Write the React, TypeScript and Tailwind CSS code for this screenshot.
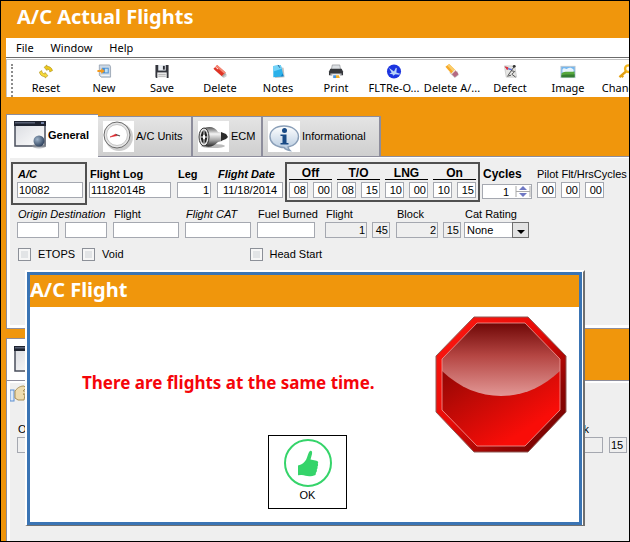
import { useState } from "react";
import type { ReactNode } from "react";
import clsx from "clsx";

const inputBase =
  "h-4 min-w-0 shrink-0 rounded-none border border-[#a5a8b0] px-px text-[11px] leading-[14px] text-black outline-none";

type BoxProps = {
  label: string;
  value?: string;
  width: string;
  right?: boolean;
  center?: boolean;
  readOnly?: boolean;
  id?: string;
};

function Box({ label, value = "", width, right, center, readOnly, id }: BoxProps) {
  return (
    <input
      id={id}
      aria-label={id ? undefined : label}
      defaultValue={value}
      readOnly={readOnly}
      className={clsx(
        inputBase,
        width,
        right && "text-right",
        center && "text-center",
        readOnly ? "bg-[#efefef]" : "bg-white"
      )}
    />
  );
}

function Field({ label, id, labelClass, ...rest }: BoxProps & { id: string; labelClass?: string }) {
  return (
    <div className="flex shrink-0 flex-col">
      <label htmlFor={id} className={clsx("h-4 w-0 pl-px whitespace-nowrap leading-4", labelClass)}>
        {label}
      </label>
      <Box label={label} id={id} {...rest} />
    </div>
  );
}

function TimePair({ label, hours, minutes }: { label: string; hours: string; minutes: string }) {
  return (
    <fieldset className="flex shrink-0 flex-col">
      <legend className="mb-[2px] h-[14px] w-full border-b border-black text-center text-[12px] font-bold leading-[14px]">
        {label}
      </legend>
      <div className="flex gap-[5px]">
        <Box label={`${label} hours`} value={hours} width="w-[19px]" right />
        <Box label={`${label} minutes`} value={minutes} width="w-[19px]" right />
      </div>
    </fieldset>
  );
}

function Check({ label }: { label: string }) {
  return (
    <label className="flex items-center gap-[7px] leading-4">
      <input
        type="checkbox"
        className="size-[13px] appearance-none border border-[#8c9098] bg-[#e2e4e6] shadow-[inset_0_0_0_2px_#f6f6f6] checked:bg-[#3f6fb5]"
      />
      {label}
    </label>
  );
}

/* ---------- toolbar icons ---------- */

const Svg = ({ children }: { children: ReactNode }) => (
  <svg width="16" height="16" viewBox="0 0 16 16" aria-hidden="true">
    {children}
  </svg>
);

const ResetIcon = () => (
  <Svg>
    <path d="M6 3.500 9 1v1.500c3 0 5 1.500 6 4.500l-3 1.500c0-2-1-3-3-3V7z" fill="#edc91c" stroke="#a88a12" strokeWidth=".6" />
    <path d="M10 12.500 7 15v-1.500c-3.500 0-5.500-2-6-5L3.500 7c0 2.500 1.500 3.500 3.500 3.500V9z" fill="#f7da3a" stroke="#a88a12" strokeWidth=".6" />
  </Svg>
);

const NewIcon = () => (
  <Svg>
    <path d="M3 1h11l1 2v11H5L3 12z" fill="#cbd8e6" stroke="#8d99a8" strokeWidth=".8" />
    <rect x="6" y="4" width="7" height="6" fill="#4a8fd2" />
    <path d="M9 5h3v4H9z" fill="#bfe0f7" />
    <path d="M1 6.500h4v-2l4 3-4 3v-2H1z" fill="#f59a1b" />
    <path d="M5 12h9" stroke="#fff" />
  </Svg>
);

const SaveIcon = () => (
  <Svg>
    <path d="M1 1h14v14H2l-1-1z" fill="#33353c" />
    <rect x="4" y="1" width="8" height="6" fill="#e9edf2" />
    <rect x="9" y="2" width="2" height="4" fill="#2b2d33" />
    <rect x="3" y="9" width="10" height="6" fill="#f7f7f7" />
    <path d="M4 11h8M4 13h8" stroke="#a9a9a9" />
  </Svg>
);

const DeleteIcon = () => (
  <Svg>
    <path d="m2 6 3-3 10 8v2l-3 2z" fill="#9b9b9b" opacity=".5" />
    <path d="M1 5 5 1l9 8-4 4z" fill="#e03325" />
    <path d="m5 1 9 8-1.500 1.500L3.500 2.500z" fill="#f58a76" />
    <path d="m10 13 4-4v2l-3 3z" fill="#a8a8a8" />
    <path d="m3 3 3 2.500" stroke="#fff" />
  </Svg>
);

const NotesIcon = () => (
  <Svg>
    <path d="m5 3 9 1 1 10-10 1z" fill="#9a9a9a" opacity=".6" />
    <path d="m3 2 8-1 3 12-11 1z" fill="#2ab1ea" />
    <path d="m3 2 8-1 1 4-9 3z" fill="#73d3f8" />
    <path d="m3 14 8-1 2-3 1 3z" fill="#1680c4" />
    <path d="m8 1 2 3" stroke="#265f8d" />
  </Svg>
);

const PrintIcon = () => (
  <Svg>
    <path d="M4 1h8l1 5H3z" fill="#dce0e4" stroke="#7c7f84" strokeWidth=".6" />
    <path d="M2 5h12l1.500 3v4H.5V8z" fill="#35373b" />
    <path d="M2 10h12v2H2z" fill="#a9adb2" />
    <path d="M4 11h8l1 4H4z" fill="#f8f8f8" />
    <path d="M5 12h3v3H5z" fill="#4593dd" />
    <path d="M8 12h3l1 3H8z" fill="#f4af27" />
  </Svg>
);

const FltIcon = () => (
  <Svg>
    <circle cx="8" cy="8" r="7.500" fill="#1c35e0" />
    <path d="m2.500 4 5.500 4 2-4 1 .5-.5 4.500 4 1.500-1 1-4-.5-2.500 1.500-.5-1.500-3.500-.5 2.500-1.500z" fill="#b9d4f8" />
  </Svg>
);

const EraserIcon = () => (
  <Svg>
    <path d="m5 9 9-1 1 4-4 3z" fill="#9d9d9d" opacity=".6" />
    <path d="m1 3 4-3 7 7-4 4z" fill="#f7a928" />
    <path d="m3 1.500 2-1.500 7 7-2 2z" fill="#fbcd6c" />
    <path d="m7 10 4-4 1 1-4 4z" fill="#e8e8e8" />
    <path d="m8 11 4-4 3 4-4 3z" fill="#b56a83" />
  </Svg>
);

const DefectIcon = () => (
  <Svg>
    <path d="M2 2h11l2 12H4z" fill="#e6e6e4" stroke="#b4b4b4" strokeWidth=".6" />
    <path d="m13 2-7 10M9 7l4 1-3 3 4 3M5 13l4-1" stroke="#4c4c4c" fill="none" />
    <path d="m3 3 2 3 1-2z" fill="#d52d3f" stroke="#d52d3f" />
    <path d="m6 5 4 1" stroke="#5a6cd0" strokeWidth="1.500" />
    <circle cx="12.500" cy="2.500" r="1.500" fill="#333" />
  </Svg>
);

const ImageIcon = () => (
  <Svg>
    <rect x=".5" y="2.500" width="15" height="12" fill="#74b7ef" stroke="#b8c6d1" />
    <path d="M2 6c2-3 3 0 5-1s4-2 7 1v3H2z" fill="#e8f4fc" />
    <path d="M1 10c4-3 8-1 14-2v6H1z" fill="#56a83d" />
    <path d="M1 12c5-2 9 0 14-1v3H1z" fill="#357d31" />
  </Svg>
);

const KeyIcon = () => (
  <Svg>
    <circle cx="10.500" cy="5" r="3.500" fill="none" stroke="#f2b51c" strokeWidth="2.500" />
    <path d="m8 8-7 6m2-2 2 2" stroke="#e2a013" strokeWidth="2.500" />
  </Svg>
);

const tools = [
  { label: "Reset", icon: <ResetIcon /> },
  { label: "New", icon: <NewIcon /> },
  { label: "Save", icon: <SaveIcon /> },
  { label: "Delete", icon: <DeleteIcon /> },
  { label: "Notes", icon: <NotesIcon /> },
  { label: "Print", icon: <PrintIcon /> },
  { label: "FLTRe-O...", icon: <FltIcon /> },
  { label: "Delete A/...", icon: <EraserIcon /> },
  { label: "Defect", icon: <DefectIcon /> },
  { label: "Image", icon: <ImageIcon /> },
  { label: "Change...", icon: <KeyIcon /> },
];

/* ---------- tab icons ---------- */

function WindowIcon() {
  return (
    <svg width="32" height="28" viewBox="0 0 32 28" className="shrink-0" aria-hidden="true">
      <defs>
        <linearGradient id="win" x1="0" y1="0" x2="1" y2="1">
          <stop offset="0" stopColor="#d9dbe0" />
          <stop offset="1" stopColor="#fff" />
        </linearGradient>
        <radialGradient id="ball" cx=".35" cy=".35" r=".7">
          <stop offset="0" stopColor="#9db2c8" />
          <stop offset="1" stopColor="#2c3f5a" />
        </radialGradient>
      </defs>
      <rect x="1" y="1" width="30" height="24" fill="url(#win)" stroke="#4a4f5c" strokeWidth="1.500" />
      <rect x="0" y="0" width="32" height="5" fill="#1f2430" />
      <rect x="1" y="1" width="20" height="1.500" fill="#596175" />
      <rect x="27" y="1" width="3" height="2" fill="#7585a8" />
      <ellipse cx="25" cy="25" rx="7" ry="2.500" fill="#8f949c" opacity=".6" />
      <circle cx="25" cy="20" r="5.500" fill="url(#ball)" />
    </svg>
  );
}

function GaugeIcon() {
  return (
    <svg width="31" height="31" viewBox="0 0 31 31" className="shrink-0 bg-white" aria-hidden="true">
      <circle cx="16" cy="16" r="14" fill="#9c9c9c" opacity=".5" />
      <circle cx="14" cy="14" r="13" fill="#e6e6e6" stroke="#6b6b6b" />
      <circle cx="14" cy="14" r="10.500" fill="#fff" stroke="#c4c4c4" />
      <path d="m7 16 6-3 1.500 1.500z" fill="#dc2328" stroke="#dc2328" strokeWidth=".6" />
      <path d="m13 13.500 4 1.500" stroke="#555" strokeWidth="1.200" />
    </svg>
  );
}

function EngineIcon() {
  return (
    <svg width="31" height="31" viewBox="0 0 31 31" className="shrink-0 bg-white" aria-hidden="true">
      <defs>
        <linearGradient id="engine" x1="0" y1="0" x2="0" y2="1">
          <stop offset="0" stopColor="#555" />
          <stop offset=".35" stopColor="#f5f5f5" />
          <stop offset=".65" stopColor="#a8a8a8" />
          <stop offset="1" stopColor="#222" />
        </linearGradient>
      </defs>
      <ellipse cx="15" cy="25" rx="12" ry="2" fill="#bbb" />
      <path d="M6 7c6-2 11-1 14 4l4 1v8l-4 1c-4 4-8 6-14 4z" fill="url(#engine)" />
      <path d="m23 11 5 2 2 3-2 2-5 2z" fill="#2b2b2b" />
      <ellipse cx="6" cy="16" rx="5" ry="9" fill="#e0e0e0" stroke="#333" />
      <ellipse cx="6" cy="16" rx="3.200" ry="6.500" fill="#222" />
      <path d="M3 16h6M6 10v12" stroke="#ddd" />
      <ellipse cx="6" cy="16" rx="1.200" ry="2.500" fill="#fff" />
    </svg>
  );
}

function InfoIcon() {
  return (
    <svg width="32" height="31" viewBox="0 0 32 31" className="shrink-0 bg-white" aria-hidden="true">
      <defs>
        <linearGradient id="bubble" x1="0" y1="0" x2="0" y2="1">
          <stop offset="0" stopColor="#fff" />
          <stop offset="1" stopColor="#b3c8de" />
        </linearGradient>
      </defs>
      <path
        d="M16 5C7.500 5 2 9.500 2 15.500S7 25 12 26c1 .3 3 .5 4 .5 1 1.500 3 2.500 6 3-1.500-1.500-2-2.500-2-3.500 6-1 10.500-5 10.500-10.500C30.500 9.500 24 5 16 5z"
        fill="url(#bubble)"
        stroke="#8a9fb8"
        strokeWidth="1.400"
      />
      <circle cx="16.500" cy="9.500" r="2.500" fill="#194a85" />
      <path d="M12.500 13.500h6V22h2v1.500h-8V22h2v-7h-2z" fill="#194a85" />
    </svg>
  );
}

function HandIcon() {
  return (
    <svg width="24" height="17" viewBox="0 0 24 17" aria-hidden="true">
      <rect x="0" y="5" width="4" height="11" fill="#dceafa" stroke="#5c8fd0" />
      <path d="M5 6c3-4 6-5 9-5l2 2-3 3h10v3H13l2 1-1 5H8l-3-2z" fill="#efdcae" stroke="#a98f55" />
    </svg>
  );
}

function StopSign() {
  return (
    <svg viewBox="0 0 132 137" className="w-[132px] shrink-0" role="img" aria-label="Stop">
      <defs>
        <linearGradient id="rim" x1="0" y1="0" x2="1" y2="1">
          <stop offset="0" stopColor="#ff1a12" />
          <stop offset=".45" stopColor="#e80b07" />
          <stop offset=".75" stopColor="#8d0503" />
          <stop offset="1" stopColor="#6b0302" />
        </linearGradient>
        <linearGradient id="face" x1="0" y1=".2" x2=".5" y2="1">
          <stop offset="0" stopColor="#7d0402" />
          <stop offset=".5" stopColor="#bd0a06" />
          <stop offset="1" stopColor="#f90d08" />
        </linearGradient>
        <linearGradient id="gloss" x1="0" y1="0" x2="0" y2="1">
          <stop offset="0" stopColor="#6f0706" />
          <stop offset=".45" stopColor="#b54643" />
          <stop offset="1" stopColor="#e29795" />
        </linearGradient>
      </defs>
      <path d="M39 1h54l38 39v56l-38 40H39L1 96V40z" fill="url(#rim)" stroke="#8f5b56" />
      <path d="M42 7h48l35 36v51l-35 36H42L7 94V43z" fill="url(#face)" />
      <path d="M42 7h48l35 36v12c-18 17-38 25-59 25S25 72 7 55V43z" fill="url(#gloss)" />
      <path d="M42 7h48l35 36v51l-35 36H42L7 94V43z" fill="none" stroke="#f2a09c" strokeWidth=".8" />
    </svg>
  );
}

function ThumbIcon() {
  return (
    <svg width="48" height="48" viewBox="0 0 48 48" aria-hidden="true">
      <circle cx="24" cy="24" r="23" fill="none" stroke="#35d46a" strokeWidth="2" />
      <path
        d="M14 26.500 17 25.500c3-1.500 5-4 6-7 1-2.500 1.500-5.500 3-6.500 1.500-.6 2.500.5 2 3L26.500 20.500l6 1.200c1.700.3 2.200 1.800 1.300 3 .5 1 .4 2.200-.4 3 .4 1 .2 2-.6 2.700.3 1.200 0 2.300-.8 3l-.5 2.600c-3 1.300-7 1.700-10 .8-1.500-.6-3-1-4.500-.8l-3 .3z"
        fill="#35d46a"
      />
    </svg>
  );
}

const tabs = [
  { label: "A/C Units", icon: <GaugeIcon />, width: "w-[95px]" },
  { label: "ECM", icon: <EngineIcon />, width: "w-[70px]" },
  { label: "Informational", icon: <InfoIcon />, width: "w-[118px]" },
];

export default function App() {
  const [showAlert, setShowAlert] = useState(true);

  return (
    <div className="relative flex h-screen flex-col overflow-hidden border border-black bg-[#f0960c] font-['Liberation_Sans',Arial,sans-serif] text-[11px] text-black">
      <h1 className="h-[37px] shrink-0 pl-4 font-['Noto_Sans',sans-serif] text-[20px] font-bold leading-8 text-white">
        A/C Actual Flights
      </h1>

      <div className="ml-[5px] shrink-0 bg-white font-['Noto_Sans',sans-serif] text-[11px]">
        <nav className="flex h-5 gap-[17px] border-b border-[#6b6b6b] pl-[10px]">
          <button className="leading-4">File</button>
          <button className="leading-4">Window</button>
          <button className="leading-4">Help</button>
        </nav>
        <div className="mt-px flex h-[38px] overflow-hidden border-t border-l border-[#c4c4c4] pt-[4px]">
          <div className="mr-1 ml-[4px] w-0 shrink-0 border-l-2 border-dotted border-[#8c8c8c]" />
          {tools.map((t) => (
            <button key={t.label} className="flex w-[58px] shrink-0 flex-col items-center leading-[18px] whitespace-nowrap">
              {t.icon}
              <span>{t.label}</span>
            </button>
          ))}
        </div>
      </div>

      <div role="tablist" className="mt-[17px] ml-[5px] flex shrink-0 items-end">
        <button
          role="tab"
          aria-selected="true"
          className="relative -mb-px flex h-[43px] w-[92px] items-start gap-[2px] border-t border-l border-[#8d8d9c] bg-white pt-[6px] pl-[7px] text-[11px] font-bold leading-[28px]"
        >
          <WindowIcon />
          General
        </button>
        {tabs.map((t) => (
          <button
            key={t.label}
            role="tab"
            aria-selected="false"
            className={clsx(
              "flex h-10 items-center gap-[2px] border-t border-r-2 border-[#8d8d9c] bg-linear-to-b from-[#e4e4e4] to-[#cfcfcf] pl-[5px]",
              t.width
            )}
          >
            {t.icon}
            {t.label}
          </button>
        ))}
      </div>

      <section className="ml-[5px] shrink-0 border-y border-l border-[#8d8d9c] bg-white pt-px pb-[3px] pl-[3px]">
        <div className="min-h-[167px] bg-[#efefef] pt-1 pl-px">
          <div className="flex items-start">
            <div className="mr-[2px] shrink-0 border-2 border-[#505050] pt-[2px] pr-[2px] pb-[5px] pl-1">
              <Field id="ac" label="A/C" value="10082" width="w-[66px]" labelClass="font-bold italic" />
            </div>
            <div className="flex gap-[6px] pt-1">
              <Field id="log" label="Flight Log" value="11182014B" width="w-[82px]" labelClass="font-bold" />
              <Field id="leg" label="Leg" value="1" width="w-[34px]" labelClass="font-bold" right />
              <Field id="date" label="Flight Date" value="11/18/2014" width="w-[66px]" labelClass="font-bold italic" center />
            </div>
            <div className="mx-[2px] flex shrink-0 gap-[5px] border-2 border-[#505050] p-[2px]">
              <TimePair label="Off" hours="08" minutes="00" />
              <TimePair label="T/O" hours="08" minutes="15" />
              <TimePair label="LNG" hours="10" minutes="00" />
              <TimePair label="On" hours="10" minutes="15" />
            </div>
            <div className="flex shrink-0 flex-col pt-1">
              <label htmlFor="cycles" className="h-[18px] pl-px text-[12px] font-bold leading-4">
                Cycles
              </label>
              <div className="flex h-[15px] w-[50px] items-center border border-[#a5a8b0] bg-white">
                <input id="cycles" defaultValue="1" className="w-[26px] text-right text-[11px] leading-3 outline-none" />
                <svg width="16" height="13" viewBox="0 0 16 13" className="ml-[6px]" aria-hidden="true">
                  <path d="M1 1v11M15 1v11M1 6.500h14" stroke="#aaa" />
                  <path d="m8 1 4 4H4zM8 12l4-4H4z" fill="#6f78c4" />
                </svg>
              </div>
            </div>
            <div className="ml-[5px] flex shrink-0 flex-col pt-1">
              <div className="flex h-4 w-0 whitespace-nowrap leading-4">
                <span>Pilot Flt/Hrs</span>
                <span>Cycles</span>
              </div>
              <div className="flex gap-[5px]">
                <Box label="Pilot flight" value="00" width="w-[19px]" right />
                <Box label="Pilot hours" value="00" width="w-[19px]" right />
                <Box label="Pilot cycles" value="00" width="w-[19px]" right />
              </div>
            </div>
          </div>

          <div className="mt-px flex items-start gap-[6px] pl-[6px]">
            <div className="flex shrink-0 flex-col">
              <div className="flex h-4 w-0 gap-[3px] pl-px italic whitespace-nowrap leading-4">
                <label htmlFor="origin">Origin</label>
                <label htmlFor="destination">Destination</label>
              </div>
              <div className="flex gap-[6px]">
                <Box id="origin" label="Origin" width="w-[42px]" />
                <Box id="destination" label="Destination" width="w-[42px]" />
              </div>
            </div>
            <Field id="flight" label="Flight" width="w-[66px]" />
            <Field id="cat" label="Flight CAT" width="w-[66px]" labelClass="italic" />
            <Field id="fuel" label="Fuel Burned" width="w-[58px]" />
            <div className="ml-1 flex items-end gap-[5px]">
              <Field id="fh" label="Flight" value="1" width="w-[42px]" right readOnly />
              <Box label="Flight minutes" value="45" width="w-[18px]" right readOnly />
            </div>
            <div className="flex items-end gap-[5px]">
              <Field id="bh" label="Block" value="2" width="w-[42px]" right readOnly />
              <Box label="Block minutes" value="15" width="w-[18px]" right readOnly />
            </div>
            <div className="-ml-[3px] flex shrink-0 flex-col">
              <label htmlFor="rating" className="h-4 pl-px leading-4">
                Cat Rating
              </label>
              <div className="relative w-[65px]">
                <select
                  id="rating"
                  className="block h-4 w-full appearance-none border border-[#a5a8b0] bg-white pl-[2px] text-[11px] leading-[14px] outline-none"
                >
                  <option>None</option>
                </select>
                <svg width="17" height="16" viewBox="0 0 17 16" className="pointer-events-none absolute top-0 right-0" aria-hidden="true">
                  <rect x=".5" y=".5" width="16" height="15" fill="#e3e3e3" stroke="#6e6e6e" />
                  <path d="M5 8h8l-4 4z" fill="#000" />
                </svg>
              </div>
            </div>
          </div>

          <div className="mt-2 flex items-center pl-[7px]">
            <Check label="ETOPS" />
            <div className="ml-[7px]">
              <Check label="Void" />
            </div>
            <div className="ml-[126px]">
              <Check label="Head Start" />
            </div>
          </div>
        </div>
      </section>

      <div className="mt-[9px] ml-[5px] shrink-0">
        <div className="h-[42px] w-[92px] border-t border-l border-[#8d8d9c] bg-white pt-[7px] pl-[7px]">
          <WindowIcon />
        </div>
      </div>
      <section className="ml-[5px] flex-1 border-t border-l border-[#8d8d9c] bg-white pt-[2px] pl-[3px]">
        <div className="h-full bg-[#efefef] pt-[2px]">
          <HandIcon />
          <div className="mt-[19px] flex items-start justify-between pr-[2px] pl-[7px]">
            <Field id="origin2" label="Origin" width="w-[42px]" readOnly />
            <div className="flex items-end gap-[6px]">
              <Field id="bh2" label="Block" width="w-[42px]" readOnly />
              <Box label="Block minutes" value="15" width="w-[18px]" readOnly />
            </div>
          </div>
        </div>
      </section>

      {showAlert && (
        <div
          role="alertdialog"
          aria-labelledby="alert-title"
          className="absolute top-[269px] right-[44px] left-[24px] border-t-2 border-r-2 border-b border-l-2 border-t-white border-r-[#707070] border-b-[#707070] border-l-white bg-white pr-px"
        >
          <div className="border-[3px] border-[#3a74b4]">
            <h2 id="alert-title" className="h-8 bg-[#f0960c] font-['Noto_Sans',sans-serif] text-[20px] font-bold leading-[30px] text-white">
              A/C Flight
            </h2>
            <div className="flex h-[215px] items-start justify-between pt-[9px] pr-3">
              <div className="flex flex-col items-start pl-[52px]">
                <p className="pt-[55px] font-['Noto_Sans',sans-serif] text-[17px] font-bold leading-6 whitespace-nowrap text-[#f5050a]">
                  There are flights at the same time.
                </p>
                <button
                  onClick={() => setShowAlert(false)}
                  className="mt-10 ml-[186px] flex h-[74px] w-[79px] flex-col items-center border border-black bg-white pt-[3px] leading-4"
                >
                  <ThumbIcon />
                  OK
                </button>
              </div>
              <StopSign />
            </div>
          </div>
        </div>
      )}
    </div>
  );
}
